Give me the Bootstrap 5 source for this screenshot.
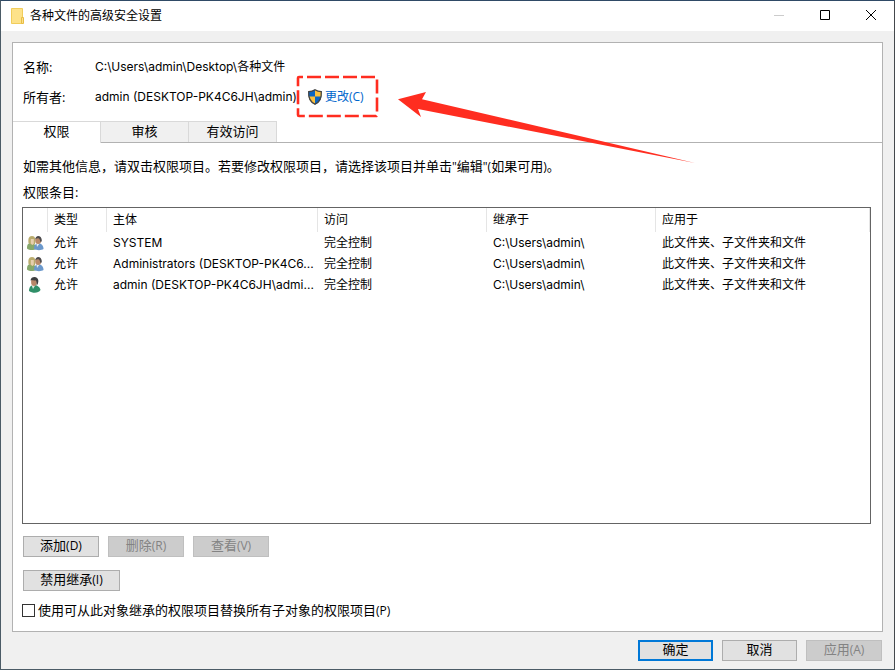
<!DOCTYPE html>
<html lang="zh-CN">
<head>
<meta charset="utf-8">
<meta name="viewport" content="width=device-width, initial-scale=1">
<title>各种文件的高级安全设置</title>
<link href="https://cdn.jsdelivr.net/npm/bootstrap@5.3.0/dist/css/bootstrap.min.css" rel="stylesheet">
<style>
  body { font: 12px/20px "Open Sans", "Noto Sans CJK SC", sans-serif; color: #000; background: #f0f0f0; }
  small { font-size: 12px; line-height: 1; }
  .latin { font-family: Inter, "Noto Sans CJK SC", sans-serif; }
  .dialog { border: 1px solid #4b5b66; border-top-color: #2f4a66; border-right-color: #44484c; }
  .title-bar { height: 30px; padding-left: 10px; gap: 5px; }
  .win-btn { width: 46px; height: 30px; border: 0; background: none; padding: 0 0 2px; }
  .win-controls { line-height: 0; }
  .dialog-main { padding: 11px 11px 0; }
  .panel { border: 1px solid #b2b2b2; background: #fff; }
  .info { padding: 14px 10px 14px; }
  .info-row { margin-bottom: 10px; }
  .info-row:last-child { margin-bottom: 0; }
  .info-label { width: 72px; }
  .owner { width: 200px; white-space: nowrap; }
  .ui-text { font-size: 13px; }
  .change-link { color: #0066cc; text-decoration: none; margin-left: 12px; gap: 2px; }
  .callout-mark { left: 0; top: -15px; pointer-events: none; z-index: 2; }
  .tab-strip { border-bottom: 1px solid #b2b2b2; height: 22px; }
  .tab-strip .nav-link { width: 88px; height: 21px; padding: 0; line-height: 18px; font-size: 13px; color: #000; background: #f0f0f0; border: 1px solid #d9d9d9; border-left: 0; border-bottom: 0; border-radius: 0; text-align: center; padding-bottom: 2px; }
  .tab-strip .nav-link.active { height: 22px; background: #fff; color: #000; padding-bottom: 3px; }
  .tab-body { padding: 13px 11px 11px 9px; }
  .hint { padding-left: 1px; margin-bottom: 6px; }
  .list-box { border: 1px solid #646464; margin: 5px 0 12px; overflow: auto; min-height: 120px; }
  .entries { width: 100%; table-layout: fixed; border-collapse: separate; border-spacing: 0; }
  .entries th { font-weight: 400; height: 24px; padding: 0 0 0 6px; border-right: 1px solid #e5e5e5; }
  .entries td { height: 21px; line-height: 21px; padding: 0 0 0 6px; white-space: nowrap; }
  .entries td:first-child { padding: 0 0 0 4px; line-height: 0; }
  .c-icon { width: 25px; } .c-type { width: 59px; } .c-who { width: 211px; } .c-mid { width: 169px; }
  .win { height: 21px; min-width: 76px; padding: 0 15px 2px; line-height: 17px; font-size: 13px; color: #000; background: #e1e1e1; border: 1px solid #adadad; border-radius: 0; }
  .win:disabled { color: #838383; background: #ccc; border-color: #bfbfbf; opacity: 1; }
  .win.plain { min-width: 75px; }
  .win.primary { border: 2px solid #0078d7; line-height: 15px; }
  .win.wide { min-width: 97px; }
  .actions { gap: 9px; padding-left: 1px; margin-bottom: 13px; }
  .actions-last { margin-bottom: 9px; }
  .tick { appearance: none; width: 13px; height: 13px; border: 1px solid #333; background: #fff; margin: 0; }
  .tick:checked { background: #0078d7; }
  .check-row { gap: 3px; }
  .footer-bar { gap: 9px; padding: 8px 12px; }
</style>
</head>
<body>
<svg class="d-none" aria-hidden="true">
  <defs>
  <symbol id="group" viewBox="0 0 17 16">
    <path d="M0 13.500c0-4 1-5.500 4-5.500s5 2 5 6c-2 1.500-7 1.500-9-.5z" fill="#87a86c"/>
    <path d="M1.500 8C1 4 1.500 1 5 1s3.500 3 3 8l-3 1z" fill="#b9ab6c"/>
    <path d="M3.800 4h3v4.500l-1.300 1.500-1.700-1.500z" fill="#e6cfae"/>
    <path d="M7 14c0-4 1.500-5.500 4.500-5.500s5 2 5 5.500c-2 1.500-7 1.500-9.500 0z" fill="#6b98cb"/>
    <path d="M9.500 8.500h3L10 12z" fill="#e8edf2"/>
    <ellipse cx="11.200" cy="5.500" rx="3" ry="3.600" fill="#b98a6a"/>
    <path d="M8.300 4.500C8.300-1 15.500 0 14.700 6c-.3 1-1 1.500-1.300.5-.5-2-1-3-2.200-3.200-1-.1-2 .2-2.900 1.200z" fill="#4c4a4c"/>
  </symbol>
  <symbol id="person" viewBox="0 0 17 16">
    <path d="M2 14c0-4 2-6 5-6s6 2 6.500 5c-2 3.500-8 3.500-11.500 1z" fill="#2f8f68"/>
    <path d="M4.500 8h4L6 12z" fill="#dce9df"/>
    <ellipse cx="7" cy="5" rx="2.900" ry="3.900" fill="#b78768"/>
    <path d="M3.500 3.500C4-1.500 12-1 11.300 4.500 11 7 10.500 8 9.700 8c0-2-.2-4-1.200-4.700C7 4 5.500 3 3.500 3.500z" fill="#3d3f40"/>
  </symbol>
  </defs>
</svg>
<div class="dialog d-flex flex-column min-vh-100">
  <header class="title-bar bg-white d-flex align-items-center">
    <svg width="14" height="17" viewBox="0 0 14 17" aria-hidden="true"><path d="M.5.500h11v15H.5z" fill="#fde28a" stroke="#f1cd5b"/><path d="M10.500 9.500h2v6h-2z" fill="#fbe08a" stroke="#e8bd45"/></svg>
    <span class="me-auto">各种文件的高级安全设置</span>
    <div class="win-controls d-flex">
    <button class="win-btn" type="button" aria-label="最小化" disabled><svg width="10" height="10"><path d="M0 5.500h10" stroke="#ccc"/></svg></button>
    <button class="win-btn" type="button" aria-label="最大化"><svg width="10" height="10"><path d="M.5.500h9v9h-9z" fill="none" stroke="#000"/></svg></button>
    <button class="win-btn" type="button" aria-label="关闭"><svg width="10" height="10"><path d="M0 0l10 10M10 0L0 10" stroke="#000"/></svg></button>
    </div>
  </header>
  <main class="dialog-main flex-grow-1 d-flex flex-column">
    <section class="panel flex-grow-1 d-flex flex-column">
      <div class="info">
        <div class="info-row d-flex"><span class="info-label ui-text">名称:</span><span class="latin">C:\Users\admin\Desktop\各种文件</span></div>
        <div class="info-row d-flex"><span class="info-label ui-text">所有者:</span><span class="owner latin">admin (DESKTOP-PK4C6JH\admin)</span>
          <div class="position-relative">
            <a href="#" class="change-link d-flex align-items-center">
              <svg width="16" height="16" viewBox="0 0 16 16" aria-hidden="true"><path d="M8 .5C6 2 4 2.500 1.500 2.500 1 9 3 13 8 15.500z" fill="#0b66c3"/><path d="M8 .5c2 1.500 4 2 6.500 2C15 9 13 13 8 15.500z" fill="#fcc13d"/><path d="M1.600 7.500H8v8C4 13.500 2 11 1.600 7.500z" fill="#fcc13d"/><path d="M8 7.500h6.400C14 11 12 13.500 8 15.500z" fill="#0b66c3"/><path d="M8 .8c2 1.400 4 1.900 6.300 1.900C14.800 9 13 12.800 8 15.200 3 12.800 1.200 9 1.700 2.700 4 2.700 6 2.200 8 .8z" fill="none" stroke="#454545" stroke-width="1.300"/></svg>
              <span>更改(C)</span>
            </a>
            <svg class="callout-mark position-absolute" width="402" height="94" viewBox="0 0 402 94" aria-hidden="true">
              <rect x="3" y="5" width="79" height="39" rx="1" fill="none" stroke="#ff2d20" stroke-width="2.600" stroke-dasharray="14 4" stroke-dashoffset="10"/>
              <path d="M103 27.300L131 20l-4 7.200L400 91 123 37l3 8z" fill="#ff2d20"/>
            </svg>
          </div>
        </div>
      </div>
      <nav class="tab-strip nav flex-nowrap" role="tablist">
        <button class="nav-link active" type="button" role="tab" aria-selected="true">权限</button>
        <button class="nav-link" type="button" role="tab">审核</button>
        <button class="nav-link" type="button" role="tab">有效访问</button>
      </nav>
      <div class="tab-body flex-grow-1 d-flex flex-column">
        <p class="hint ui-text">如需其他信息，请双击权限项目。若要修改权限项目，请选择该项目并单击<small>"</small>编辑<small>"(</small>如果可用<small>)</small>。</p>
        <div class="hint ui-text mb-0">权限条目:</div>
        <div class="list-box flex-grow-1">
          <table class="entries">
            <colgroup><col class="c-icon"><col class="c-type"><col class="c-who"><col class="c-mid"><col class="c-mid"><col></colgroup>
            <thead><tr><th></th><th>类型</th><th>主体</th><th>访问</th><th>继承于</th><th>应用于</th></tr></thead>
            <tbody>
              <tr><td><svg width="17" height="16"><use href="#group"/></svg></td><td>允许</td><td class="latin">SYSTEM</td><td>完全控制</td><td class="latin">C:\Users\admin\</td><td>此文件夹、子文件夹和文件</td></tr>
              <tr><td><svg width="17" height="16"><use href="#group"/></svg></td><td>允许</td><td class="latin">Administrators (DESKTOP-PK4C6...</td><td>完全控制</td><td class="latin">C:\Users\admin\</td><td>此文件夹、子文件夹和文件</td></tr>
              <tr><td><svg width="17" height="16"><use href="#person"/></svg></td><td>允许</td><td class="latin">admin (DESKTOP-PK4C6JH\admi...</td><td>完全控制</td><td class="latin">C:\Users\admin\</td><td>此文件夹、子文件夹和文件</td></tr>
            </tbody>
          </table>
        </div>
        <div class="actions d-flex">
          <button class="btn win" type="button">添加<small>(D)</small></button>
          <button class="btn win" type="button" disabled>删除<small>(R)</small></button>
          <button class="btn win" type="button" disabled>查看<small>(V)</small></button>
        </div>
        <div class="actions actions-last d-flex"><button class="btn win wide" type="button">禁用继承<small>(I)</small></button></div>
        <div class="check-row d-flex align-items-center ui-text"><input class="tick" type="checkbox" id="replace"><label for="replace">使用可从此对象继承的权限项目替换所有子对象的权限项目<small>(P)</small></label></div>
      </div>
    </section>
  </main>
  <footer class="footer-bar d-flex justify-content-end">
    <button class="btn win plain primary" type="button">确定</button>
    <button class="btn win plain" type="button">取消</button>
    <button class="btn win" type="button" disabled>应用<small>(A)</small></button>
  </footer>
</div>
<script src="https://cdn.jsdelivr.net/npm/bootstrap@5.3.0/dist/js/bootstrap.bundle.min.js"></script>
</body>
</html>
